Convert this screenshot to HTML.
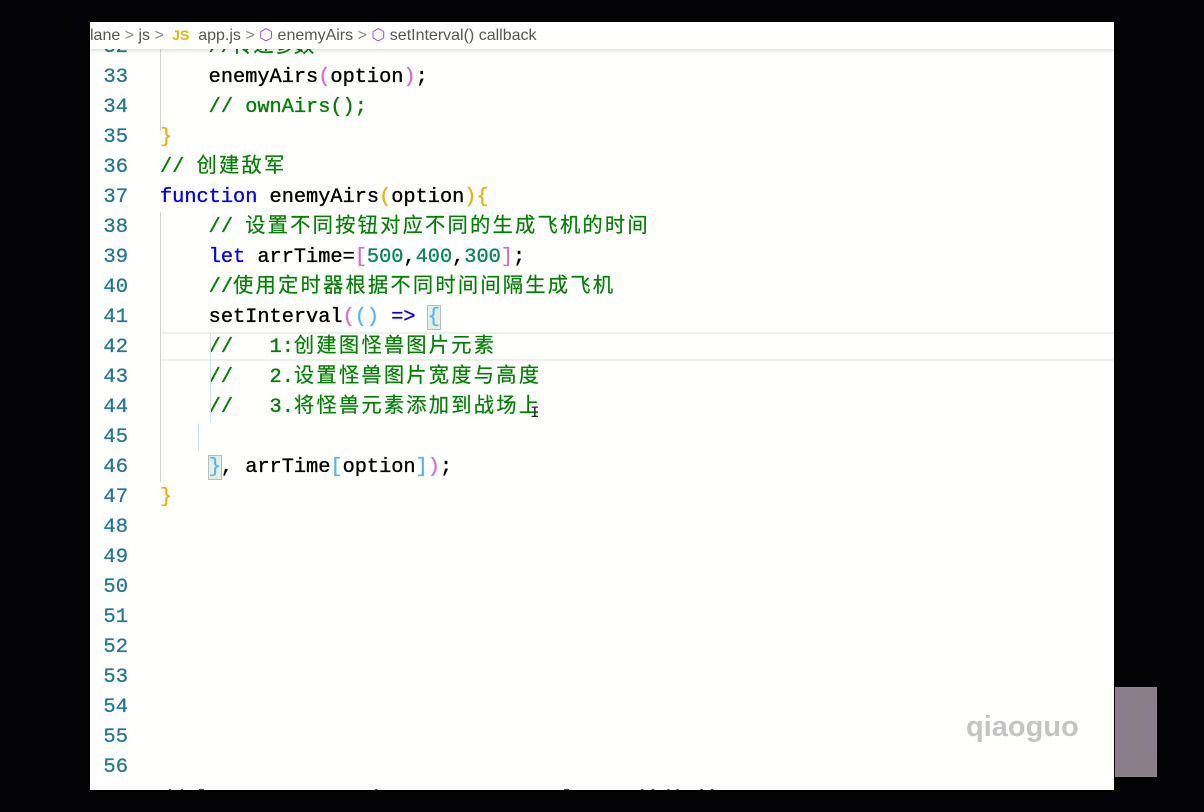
<!DOCTYPE html>
<html><head><meta charset="utf-8"><style>
body{margin:0;width:1204px;height:812px;background:#030305;position:relative;overflow:hidden}
#ed{position:absolute;left:90px;top:22px;width:1024px;height:768px;background:#fffffe;overflow:hidden}
.ln{position:absolute;left:0;width:38px;text-align:right;font:20.5px "Liberation Mono",monospace;color:#237893;line-height:30px;-webkit-text-stroke:0.3px #237893}
.cd{position:absolute;left:70px;font:20.3px "Liberation Mono","Noto Sans CJK SC",monospace;color:#000;line-height:30px;white-space:pre;-webkit-text-stroke:0.35px currentColor}
.c{color:#008000}.cj{letter-spacing:2.2px;-webkit-text-stroke:0.2px currentColor}
.k{color:#0000ff}.n{color:#098658}.y{color:#e8b400}.p{color:#d36fd0}.b{color:#56b6f0}
#bc{position:absolute;left:0;top:0;width:1024px;height:27px;background:#fffffe;font:16px "Liberation Sans",sans-serif;color:#555;line-height:27px;white-space:pre;box-shadow:0 2px 3px rgba(0,0,0,.12)}
.g{position:absolute;width:1px;background:#d3d3d3}
</style></head><body>
<div id="ed">
<div class="ln" style="top:11px">32</div><div class="cd c" style="top:11px">    //传递参数</div>
<div class="ln" style="top:41px">33</div><div class="cd" style="top:41px">    enemyAirs<span class="p">(</span>option<span class="p">)</span>;</div>
<div class="ln" style="top:71px">34</div><div class="cd c" style="top:71px">    // ownAirs();</div>
<div class="ln" style="top:101px">35</div><div class="cd y" style="top:101px">}</div>
<div class="ln" style="top:131px">36</div><div class="cd c" style="top:131px">// <span class="cj">创建敌军</span></div>
<div class="ln" style="top:161px">37</div><div class="cd" style="top:161px"><span class="k">function</span> enemyAirs<span class="y">(</span>option<span class="y">){</span></div>
<div class="ln" style="top:191px">38</div><div class="cd c" style="top:191px">    // <span class="cj">设置不同按钮对应不同的生成飞机的时间</span></div>
<div class="ln" style="top:221px">39</div><div class="cd" style="top:221px">    <span class="k">let</span> arrTime=<span class="p">[</span><span class="n">500</span>,<span class="n">400</span>,<span class="n">300</span><span class="p">]</span>;</div>
<div class="ln" style="top:251px">40</div><div class="cd c" style="top:251px">    //<span class="cj">使用定时器根据不同时间间隔生成飞机</span></div>
<div style="position:absolute;left:70px;top:310px;width:954px;height:29px;border-top:2px solid #eee;border-bottom:2px solid #eee;box-sizing:border-box"></div>
<div class="ln" style="top:281px">41</div><div class="cd" style="top:281px">    setInterval<span class="p">(</span><span class="b">()</span> <span class="k">=&gt;</span> <span class="b" style="background:#e4eee4;outline:1px solid #bbb">{</span></div>
<div class="ln" style="top:311px">42</div><div class="cd c" style="top:311px">    //   1:<span class="cj">创建图怪兽图片元素</span></div>
<div class="ln" style="top:341px">43</div><div class="cd c" style="top:341px">    //   2.<span class="cj">设置怪兽图片宽度与高度</span></div>
<div class="ln" style="top:371px">44</div><div class="cd c" style="top:371px">    //   3.<span class="cj">将怪兽元素添加到战场上</span></div>
<div class="ln" style="top:401px">45</div>
<div class="ln" style="top:431px">46</div><div class="cd" style="top:431px">    <span class="b" style="background:#e4eee4;outline:1px solid #bbb">}</span>, arrTime<span class="b">[</span>option<span class="b">]</span><span class="p">)</span>;</div>
<div class="ln" style="top:461px">47</div><div class="cd y" style="top:461px">}</div>
<div class="ln" style="top:491px">48</div><div class="ln" style="top:521px">49</div><div class="ln" style="top:551px">50</div><div class="ln" style="top:581px">51</div><div class="ln" style="top:611px">52</div><div class="ln" style="top:641px">53</div><div class="ln" style="top:671px">54</div><div class="ln" style="top:701px">55</div><div class="ln" style="top:731px">56</div>
<div class="ln" style="top:763px">57</div><div class="cd c" style="top:763px">// let monster = document.createElement('div');</div>
<div class="g" style="left:70px;top:27px;height:82px"></div>
<div class="g" style="left:70px;top:190px;height:270px"></div>
<div class="g" style="left:120px;top:311px;height:90px;background:#cfe3ef"></div>
<div class="g" style="left:108px;top:401px;height:28px;background:#cfe3ef"></div>
<div style="position:absolute;left:440px;top:382px;font:16px 'Liberation Mono',monospace;color:#222">I</div>
<div style="position:absolute;left:876px;top:689px;font:bold 29px 'Liberation Sans',sans-serif;color:#c4c4c4">qiaoguo</div>
<div id="bc">lane <span style="color:#888">&gt;</span> js <span style="color:#888">&gt;</span> <b style="color:#e8b400;font-size:14px"> JS</b>  app.js <span style="color:#888">&gt;</span> <span style="color:#8e4fbf">⬡</span> enemyAirs <span style="color:#888">&gt;</span> <span style="color:#8e4fbf">⬡</span> setInterval() callback</div>
</div>
<div style="position:absolute;left:1115px;top:687px;width:40px;height:88px;background:#8a7e8a;border:1px solid #888"></div>
</body></html>
